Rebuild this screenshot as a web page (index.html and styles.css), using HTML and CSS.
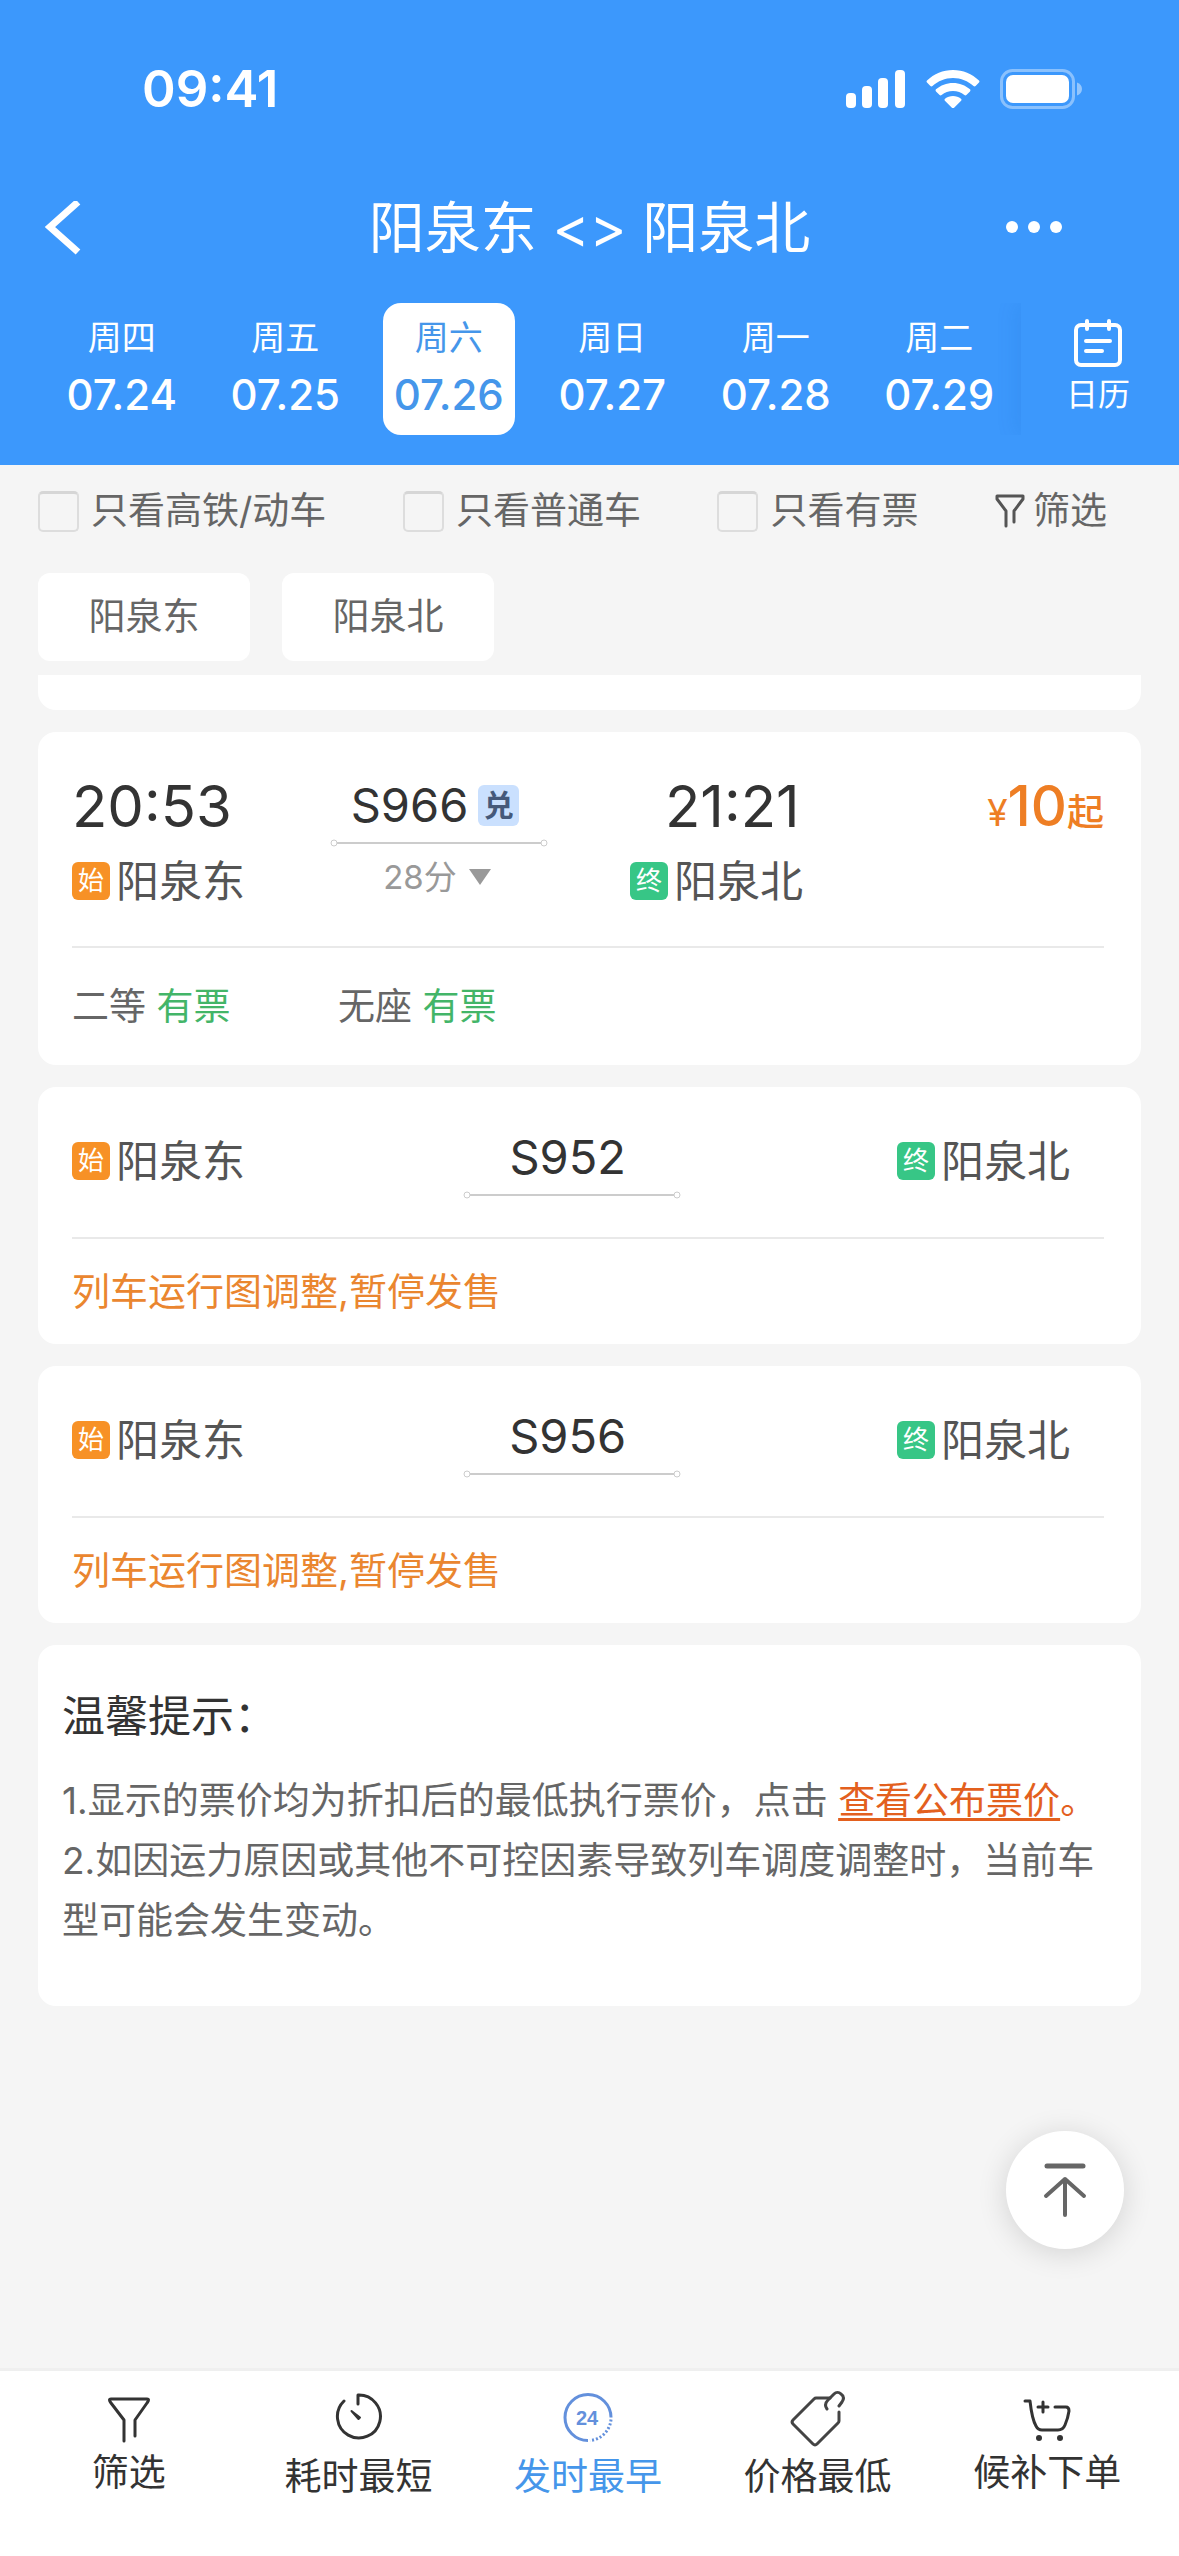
FILE: index.html
```html
<!DOCTYPE html>
<html lang="zh-CN">
<head>
<meta charset="utf-8">
<meta name="viewport" content="width=device-width, initial-scale=1">
<title>阳泉东 - 阳泉北</title>
<link rel="stylesheet" href="styles.css">
</head>
<body>
<div class="app">
  <header class="header">
    <div class="status">
      <span class="status-time">09:41</span>
      <div class="status-icons">
        <svg width="60" height="38" viewBox="0 0 60 38" fill="#fff"><rect x="0" y="23" width="10" height="15" rx="4"/><rect x="16" y="16" width="10" height="22" rx="4"/><rect x="32" y="8" width="10" height="30" rx="4"/><rect x="49" y="0" width="10" height="38" rx="4"/></svg>
        <svg width="54" height="38" viewBox="0 0 54 38" fill="#fff"><path d="M27 0C37 0 46 4 53 10.500c.6.600.6 1.500 0 2.100l-3.400 3.400c-.6.600-1.500.6-2.100 0C42 11 35 8 27 8S12 11 6.500 16c-.6.600-1.500.600-2.100 0L1 12.600c-.6-.6-.6-1.500 0-2.100C8 4 17 0 27 0z"/><path d="M27 13c6.500 0 12.300 2.400 17 6.300.6.600.6 1.500 0 2.100l-3.600 3.600c-.6.600-1.400.600-2 0-3.200-2.600-7-4-11.400-4s-8.200 1.400-11.400 4c-.6.600-1.400.600-2 0L10 21.400c-.6-.6-.6-1.500 0-2.100C14.700 15.400 20.500 13 27 13z"/><path d="M27 26c3 0 5.700 1 8 2.700.6.500.7 1.400.1 2l-7 7c-.6.600-1.600.600-2.200 0l-7-7c-.6-.6-.5-1.500.1-2C21.300 27 24 26 27 26z"/></svg>
        <svg width="82" height="40" viewBox="0 0 82 40"><rect x="1.500" y="1.500" width="72" height="37" rx="11" fill="none" stroke="#fff" stroke-opacity=".4" stroke-width="3"/><rect x="6" y="6" width="63" height="28" rx="7" fill="#fff"/><path d="M77 13.500c3 1 5 3.500 5 6.500s-2 5.500-5 6.500z" fill="#fff" fill-opacity=".45"/></svg>
      </div>
    </div>

    <div class="titlebar">
      <button class="icon-button" type="button" aria-label="返回">
        <svg width="37" height="54" viewBox="0 0 37 54" fill="none" stroke="#fff" stroke-width="7"><path d="M34 1 6 26l28 25"/></svg>
      </button>
      <h1 class="title">阳泉东 &lt;&gt; 阳泉北</h1>
      <button class="icon-button more" type="button" aria-label="更多">
        <svg width="56" height="14" viewBox="0 0 56 14" fill="#fff"><circle cx="6" cy="6" r="6"/><circle cx="28" cy="6" r="6"/><circle cx="50" cy="6" r="6"/></svg>
      </button>
    </div>

    <nav class="dates" aria-label="日期">
      <div class="date-cell"><button class="date" type="button"><span class="weekday">周四</span><span class="day">07.24</span></button></div>
      <div class="date-cell"><button class="date" type="button"><span class="weekday">周五</span><span class="day">07.25</span></button></div>
      <div class="date-cell"><button class="date date-active" type="button" aria-current="date"><span class="weekday">周六</span><span class="day">07.26</span></button></div>
      <div class="date-cell"><button class="date" type="button"><span class="weekday">周日</span><span class="day">07.27</span></button></div>
      <div class="date-cell"><button class="date" type="button"><span class="weekday">周一</span><span class="day">07.28</span></button></div>
      <div class="date-cell"><button class="date" type="button"><span class="weekday">周二</span><span class="day">07.29</span></button></div>
      <button class="calendar" type="button">
        <svg width="50" height="48" viewBox="0 0 50 48" fill="none" stroke="#fff" stroke-width="4" stroke-linecap="round"><rect x="3" y="6" width="44" height="40" rx="5"/><path d="M14 2v8M36 2v8M13 22h24M13 32h16"/></svg>
        <span>日历</span>
      </button>
    </nav>
  </header>

  <main class="main">
    <form class="filters">
      <label class="check"><input type="checkbox">只看高铁/动车</label>
      <label class="check"><input type="checkbox">只看普通车</label>
      <label class="check"><input type="checkbox">只看有票</label>
      <button class="filter-button" type="button">
        <svg width="30" height="34" viewBox="0 0 30 34" fill="none" stroke="#555" stroke-width="3" stroke-linecap="round" stroke-linejoin="round"><path d="M11 32V17L2 5V2h26v3l-9 12v11"/></svg>
        筛选
      </button>
    </form>

    <div class="chips">
      <button class="chip" type="button">阳泉东</button>
      <button class="chip" type="button">阳泉北</button>
    </div>

    <div class="list">
      <div class="card card-tail"></div>

      <article class="card">
        <div class="route route-open">
          <div class="stop">
            <span class="time">20:53</span>
            <span class="station"><i class="tag tag-start">始</i>阳泉东</span>
          </div>
          <div class="trip">
            <span class="number">S966<b class="redeem">兑</b></span>
            <svg width="218" height="8" viewBox="0 0 218 8" fill="none" stroke="#ccc"><path d="M7 4h204" stroke-width="2"/><circle cx="4" cy="4" r="3"/><circle cx="214" cy="4" r="3"/></svg>
            <button class="duration" type="button">28分<svg width="22" height="16" viewBox="0 0 22 16"><path d="M0 0h22L11 16z" fill="#999"/></svg></button>
          </div>
          <div class="stop stop-end">
            <span class="time">21:21</span>
            <span class="station"><i class="tag tag-end">终</i>阳泉北</span>
          </div>
          <div class="price"><span class="price-sign">¥</span>10<span class="price-from">起</span></div>
        </div>
        <div class="seats">
          <span class="seat">二等 <em>有票</em></span>
          <span class="seat">无座 <em>有票</em></span>
        </div>
      </article>

      <article class="card">
        <div class="route route-halted">
          <span class="station"><i class="tag tag-start">始</i>阳泉东</span>
          <div class="trip">
            <span class="number">S952</span>
            <svg width="218" height="8" viewBox="0 0 218 8" fill="none" stroke="#ccc"><path d="M7 4h204" stroke-width="2"/><circle cx="4" cy="4" r="3"/><circle cx="214" cy="4" r="3"/></svg>
          </div>
          <span class="station station-end"><i class="tag tag-end">终</i>阳泉北</span>
        </div>
        <p class="halt-note">列车运行图调整,暂停发售</p>
      </article>

      <article class="card">
        <div class="route route-halted">
          <span class="station"><i class="tag tag-start">始</i>阳泉东</span>
          <div class="trip">
            <span class="number">S956</span>
            <svg width="218" height="8" viewBox="0 0 218 8" fill="none" stroke="#ccc"><path d="M7 4h204" stroke-width="2"/><circle cx="4" cy="4" r="3"/><circle cx="214" cy="4" r="3"/></svg>
          </div>
          <span class="station station-end"><i class="tag tag-end">终</i>阳泉北</span>
        </div>
        <p class="halt-note">列车运行图调整,暂停发售</p>
      </article>

      <section class="card tips">
        <h2>温馨提示：</h2>
        <p>1.显示的票价均为折扣后的最低执行票价，点击 <a href="#prices">查看公布票价</a><span class="stop-mark">。</span></p>
        <p>2.如因运力原因或其他不可控因素导致列车调度调整时，当前车型可能会发生变动。</p>
      </section>
    </div>
  </main>

  <nav class="tabs" aria-label="排序">
    <button class="tab tab-short" type="button">
      <svg width="44" height="47" viewBox="0 0 44 47" fill="none" stroke="#333" stroke-width="3" stroke-linecap="round" stroke-linejoin="round"><path d="M17 45V24L4 7Q1 3 4 3h36q3 0 0 4L28 24v16"/></svg>
      筛选
    </button>
    <button class="tab" type="button">
      <svg width="50" height="58" viewBox="0 0 50 58" fill="none" stroke="#333" stroke-width="3" stroke-linecap="round" stroke-linejoin="round"><path d="M25 15V6A21.500 21.500 0 1 1 11 12"/><path d="M18.500 22 27 28.500 25.500 30z" fill="#333" stroke-width="2"/></svg>
      耗时最短
    </button>
    <button class="tab tab-active" type="button">
      <svg width="50" height="58" viewBox="0 0 50 58" fill="none" stroke="#6390dc" stroke-width="3"><path d="M25 51.500A23 23 0 1 1 48 28.500"/><path d="M48 30.500a23 23 0 0 1-21 21" stroke-dasharray="2 2"/><text x="24" y="36" text-anchor="middle" class="tab-24">24</text></svg>
      发时最早
    </button>
    <button class="tab" type="button">
      <svg width="56" height="57" viewBox="0 0 56 57" fill="none" stroke="#444" stroke-width="3" stroke-linecap="round" stroke-linejoin="round"><path d="M40 8H26q-1 0-2 1L3 30q-2 2 0 4l20 20q2 2 4 0l21-21q1-1 1-2v-9"/><path d="M37 19c-3-4-1-7 1-9l6-6c2-2 5-2 7 0 3 2 3 5 1 8l-3 4"/></svg>
      价格最低
    </button>
    <button class="tab tab-short" type="button">
      <svg width="50" height="48" viewBox="0 0 50 48" fill="none" stroke="#333" stroke-width="3" stroke-linecap="round" stroke-linejoin="round"><path d="M3 6h5q2 18 6 25 2 4 6 4h16q5 0 7-5 3-7 4-14 0-4-3-4H33M21 7v10M16 12h10"/><circle cx="17" cy="43" r="3" fill="#333" stroke="none"/><circle cx="38" cy="43" r="3" fill="#333" stroke="none"/></svg>
      候补下单
    </button>
  </nav>

  <button class="to-top" type="button" aria-label="回到顶部">
    <svg width="44" height="54" viewBox="0 0 44 54" fill="none" stroke="#666" stroke-width="4" stroke-linecap="round" stroke-linejoin="round"><path d="M4 3h36" stroke-width="5"/><path d="M22 52V16M3 33l19-17 19 17"/></svg>
  </button>
</div>
</body>
</html>
```
FILE: styles.css
```css
* {
  box-sizing: border-box;
}

body,
h1,
h2,
p {
  margin: 0;
}

body {
  background: #f5f5f5;
  color: #333;
  font-family: Inter, "Noto Sans CJK SC", sans-serif;
  font-size: 37px;
  line-height: 60px;
}

button {
  padding: 0;
  border: 0;
  background: none;
  color: inherit;
  font: inherit;
}

svg {
  display: block;
  flex: none;
}

i,
em {
  font-style: normal;
}

.app {
  display: flex;
  flex-direction: column;
  min-height: 100vh;
}

/* Header */

.header {
  background: #3c98fc;
  color: #fff;
  padding-bottom: 30px;
}

.status {
  display: flex;
  align-items: center;
  justify-content: space-between;
  height: 177px;
  padding: 0 97px 0 142px;
}

.status-time {
  font-size: 51px;
  font-weight: 600;
}

.status-icons {
  display: flex;
  align-items: center;
  gap: 20px;
}

.titlebar {
  display: grid;
  grid-template-columns: 73px 1fr 73px;
  align-items: center;
  height: 102px;
  padding: 0 44px;
}

.title {
  font-size: 56px;
  font-weight: 400;
  text-align: center;
}

.icon-button {
  justify-self: start;
}

.more {
  justify-self: end;
  margin-right: 73px;
}

.dates {
  display: flex;
  margin-top: 24px;
  padding-left: 40px;
  overflow: hidden;
}

.date-cell {
  display: flex;
  flex: 1;
  justify-content: center;
}

.date {
  display: flex;
  flex-direction: column;
  align-items: center;
  width: 132px;
  height: 132px;
  padding-top: 13px;
  border-radius: 18px;
}

.date-active {
  background: #fff;
  color: #4596ea;
}

.weekday {
  font-size: 34px;
  line-height: 44px;
}

.day {
  font-size: 42px;
  font-weight: 500;
  line-height: 70px;
}

.calendar {
  display: flex;
  flex-direction: column;
  align-items: center;
  width: 158px;
  padding: 16px 4px 0 0;
  box-shadow: -4px 0 20px rgba(20, 90, 190, 0.12);
  font-size: 32px;
  line-height: 56px;
}

/* Filters */

.main {
  flex: 1;
  padding: 0 38px 24px;
}

.filters {
  display: flex;
  align-items: center;
  justify-content: space-between;
  height: 92px;
  padding-right: 34px;
  color: #666;
}

.check {
  display: flex;
  align-items: center;
  gap: 12px;
}

.check input {
  appearance: none;
  width: 41px;
  height: 41px;
  margin: 0;
  border: 2px solid #ddd;
  border-top: 3px solid #d6d6d6;
  border-radius: 5px;
}

.filter-button {
  display: flex;
  align-items: center;
  gap: 8px;
}

.chips {
  display: flex;
  gap: 32px;
  margin-top: 16px;
}

.chip {
  width: 212px;
  height: 88px;
  border-radius: 12px;
  background: #fff;
  color: #666;
}

/* Train list */

.list {
  display: flex;
  flex-direction: column;
  gap: 22px;
  margin-top: 14px;
}

.card {
  padding: 0 37px 0 34px;
  border-radius: 18px;
  background: #fff;
}

.card-tail {
  height: 35px;
  border-radius: 0 0 18px 18px;
}

.route {
  display: grid;
  border-bottom: 2px solid #e9e9e9;
}

.route-open {
  grid-template-columns: 25% 218px 1fr auto;
  padding: 39px 0 35px;
}

.route-halted {
  grid-template-columns: 12fr 218px 13fr;
  padding: 36px 0 38px;
}

.stop {
  display: flex;
  flex-direction: column;
  gap: 10px;
}

.stop-end {
  padding-left: 82px;
}

.stop-end .time {
  padding-left: 35px;
}

.time {
  font-size: 58px;
  line-height: 70px;
}

.station {
  display: flex;
  align-items: center;
  gap: 6px;
  color: #555;
  font-size: 43px;
  line-height: 60px;
}

.route-halted .station {
  line-height: 76px;
}

.station-end {
  justify-self: end;
  padding-right: 34px;
}

.tag {
  width: 38px;
  height: 38px;
  border-radius: 6px;
  color: #fff;
  font-size: 26px;
  line-height: 38px;
  text-align: center;
}

.tag-start {
  background: #f79126;
}

.tag-end {
  background: #37c686;
}

.trip {
  display: flex;
  flex-direction: column;
  align-items: center;
}

.number {
  display: flex;
  align-items: center;
  gap: 10px;
  padding-right: 8px;
  font-size: 47px;
  line-height: 68px;
}

.redeem {
  width: 41px;
  height: 41px;
  border-radius: 6px;
  background: #cae0fe;
  color: #45597a;
  font-size: 30px;
  line-height: 41px;
  text-align: center;
}

.duration {
  display: flex;
  align-items: center;
  gap: 12px;
  padding-right: 4px;
  color: #999;
  font-size: 33px;
}

.price {
  color: #ee7e24;
  font-size: 56px;
  font-weight: 500;
  line-height: 70px;
}

.price-sign,
.price-from {
  font-size: 37px;
}

.price-sign {
  font-weight: 400;
}

.seats {
  display: flex;
  height: 117px;
  align-items: center;
  color: #666;
}

.seat {
  width: 266px;
}

.seat em {
  color: #43b568;
}

.halt-note {
  color: #ea862f;
  font-size: 38px;
  line-height: 105px;
}

.tips {
  padding: 41px 24px 55px;
  color: #666;
}

.tips h2 {
  margin-bottom: 25px;
  color: #333;
  font-size: 43px;
  font-weight: 400;
}

.tips a {
  color: #e3601e;
  text-decoration-thickness: 3px;
  text-underline-offset: 4px;
}

.stop-mark {
  color: #e3601e;
}

/* Bottom bar */

.tabs {
  position: sticky;
  bottom: 0;
  display: grid;
  grid-template-columns: repeat(5, 1fr);
  height: 188px;
  padding: 0 17px 0 14px;
  border-top: 3px solid #efefef;
  background: #fff;
}

.tab {
  display: flex;
  flex-direction: column;
  align-items: center;
  justify-content: end;
  padding-bottom: 49px;
}

.tab-short {
  padding-bottom: 53px;
}

.tab-active {
  color: #4596ea;
}

.tab-24 {
  fill: #6390dc;
  stroke: none;
  font-family: "Liberation Sans", sans-serif;
  font-size: 20px;
  font-weight: 700;
}

.to-top {
  position: fixed;
  right: 55px;
  bottom: 307px;
  display: grid;
  place-items: center;
  width: 118px;
  height: 118px;
  border-radius: 50%;
  background: #fff;
  box-shadow: 0 4px 30px rgba(0, 0, 0, 0.14);
}
```
